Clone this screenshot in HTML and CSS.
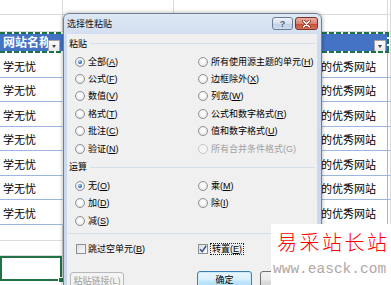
FILE: index.html
```html
<!DOCTYPE html>
<html lang="zh-CN">
<head>
  <meta charset="UTF-8" />
  <title>选择性粘贴</title>
  <link rel="stylesheet" href="styles.css">
</head>
<body>
  <div class="sheet">
    <div class="row top1">
      <div class="cell ca"></div><div class="cell cb"></div><div class="cell cc"></div><div class="cell cd"></div>
    </div>
    <div class="row top2">
      <div class="cell ca"></div><div class="cell cb"></div><div class="cell cc"></div><div class="cell cd"></div>
    </div>
    <div class="row hdr">
      <div class="hrange">
        <div class="hc ca"><span class="htext">网站名称</span><span class="filter"></span></div>
        <div class="hc cb"></div>
        <div class="hc cc"><span class="htext"></span><span class="filter"></span></div>
      </div>
      <div class="cell cd"></div>
    </div>
    <div class="row drow"><div class="cell ca">学无忧</div><div class="cell cb"></div><div class="cell cc">的优秀网站</div><div class="cell cd"></div></div>
    <div class="row drow s"><div class="cell ca">学无忧</div><div class="cell cb"></div><div class="cell cc">的优秀网站</div><div class="cell cd"></div></div>
    <div class="row drow"><div class="cell ca">学无忧</div><div class="cell cb"></div><div class="cell cc">的优秀网站</div><div class="cell cd"></div></div>
    <div class="row drow s"><div class="cell ca">学无忧</div><div class="cell cb"></div><div class="cell cc">的优秀网站</div><div class="cell cd"></div></div>
    <div class="row drow"><div class="cell ca">学无忧</div><div class="cell cb"></div><div class="cell cc">的优秀网站</div><div class="cell cd"></div></div>
    <div class="row drow s"><div class="cell ca">学无忧</div><div class="cell cb"></div><div class="cell cc">的优秀网站</div><div class="cell cd"></div></div>
    <div class="row drow"><div class="cell ca">学无忧</div><div class="cell cb"></div><div class="cell cc">的优秀网站</div><div class="cell cd"></div></div>
    <div class="row erow1">
      <div class="cell ca"></div><div class="cell cb"></div><div class="cell cc"></div><div class="cell cd"></div>
    </div>
    <div class="row erow2">
      <div class="cell ca"></div><div class="cell cb"></div><div class="cell cc"></div><div class="cell cd"></div>
    </div>
    <div class="row srow">
      <div class="cell ca"><span class="sel"><i class="handle"></i></span></div><div class="cell cb"></div><div class="cell cc"></div><div class="cell cd"></div>
    </div>
  </div>

  <div class="dialog">
    <div class="titlebar">
      <span class="title">选择性粘贴</span>
      <div class="caps">
        <span class="cap help">?</span>
        <span class="cap close">
          <svg width="9" height="8" viewBox="0 0 9 8">
            <path d="M1.5 1 L7.5 7 M7.5 1 L1.5 7" stroke="#7d2a1c" stroke-width="3" stroke-linecap="round"/>
            <path d="M1.5 1 L7.5 7 M7.5 1 L1.5 7" stroke="#fff" stroke-width="1.6" stroke-linecap="round"/>
          </svg>
        </span>
      </div>
    </div>
    <div class="client">
      <div class="group"><span>粘贴</span></div>
      <div class="opts">
        <label class="opt"><i class="radio on"></i><span>全部<span class="key">(<u>A</u>)</span></span></label>
        <label class="opt"><i class="radio"></i><span>所有使用源主题的单元<span class="key">(<u>H</u>)</span></span></label>
        <label class="opt"><i class="radio"></i><span>公式<span class="key">(<u>F</u>)</span></span></label>
        <label class="opt"><i class="radio"></i><span>边框除外<span class="key">(<u>X</u>)</span></span></label>
        <label class="opt"><i class="radio"></i><span>数值<span class="key">(<u>V</u>)</span></span></label>
        <label class="opt"><i class="radio"></i><span>列宽<span class="key">(<u>W</u>)</span></span></label>
        <label class="opt"><i class="radio"></i><span>格式<span class="key">(<u>T</u>)</span></span></label>
        <label class="opt"><i class="radio"></i><span>公式和数字格式<span class="key">(<u>R</u>)</span></span></label>
        <label class="opt"><i class="radio"></i><span>批注<span class="key">(<u>C</u>)</span></span></label>
        <label class="opt"><i class="radio"></i><span>值和数字格式<span class="key">(<u>U</u>)</span></span></label>
        <label class="opt"><i class="radio"></i><span>验证<span class="key">(<u>N</u>)</span></span></label>
        <label class="opt off"><i class="radio"></i><span>所有合并条件格式<span class="key">(G)</span></span></label>
      </div>
      <div class="group g2"><span>运算</span></div>
      <div class="opts">
        <label class="opt"><i class="radio on"></i><span>无<span class="key">(<u>O</u>)</span></span></label>
        <label class="opt"><i class="radio"></i><span>乘<span class="key">(<u>M</u>)</span></span></label>
        <label class="opt"><i class="radio"></i><span>加<span class="key">(<u>D</u>)</span></span></label>
        <label class="opt"><i class="radio"></i><span>除<span class="key">(<u>I</u>)</span></span></label>
        <label class="opt"><i class="radio"></i><span>减<span class="key">(<u>S</u>)</span></span></label>
      </div>
      <div class="sep"></div>
      <div class="checks">
        <label class="chk first"><i class="box"></i><span>跳过空单元<span class="key">(<u>B</u>)</span></span></label>
        <label class="chk"><i class="box">
          <svg width="8" height="8" viewBox="0 0 8 8"><path d="M1 4.2 L3.2 6.6 L7.2 0.8" fill="none" stroke="#34508f" stroke-width="1.5"/></svg>
        </i><span class="focus">转置<span class="key">(<u>E</u>)</span></span></label>
      </div>
      <div class="buttons">
        <span class="btn link">粘贴链接<span class="key">(L)</span></span>
        <span class="btn ok">确定</span>
        <span class="btn cancel">取消</span>
      </div>
    </div>
  </div>

  <div class="mark">
    <div class="mark-cn">易采站长站</div>
    <div class="mark-url">www.easck.com</div>
  </div>
</body>
</html>
```

FILE: styles.css
```css
* {
  box-sizing: border-box;
}
body {
  margin: 0;
  width: 391px;
  height: 285px;
  overflow: hidden;
  position: relative;
  background: #fff;
  color: #000;
  font-family: "Liberation Sans", "Noto Sans CJK SC", sans-serif;
  text-autospace: no-autospace;
}

/* spreadsheet behind the dialog */
.sheet {
  font-size: 11px;
  line-height: 14px;
}
.row {
  display: flex;
}
.cell {
  flex: none;
  border-right: 1px solid #dadada;
  border-bottom: 1px solid #dadada;
}
.ca { width: 63px; }
.cb { width: 111px; }
.cc { width: 214px; }
.cd { flex: 1; }

.top1 { height: 15px; }
.top2 { height: 17px; }

.hdr { height: 21px; }
.hrange {
  display: flex;
  position: relative;
  background: #4472c4;
  color: #fff;
  font-weight: bold;
  font-size: 12px;
}
.hrange::after {
  content: '';
  position: absolute;
  left: 0;
  right: -1px;
  top: 0;
  bottom: 0;
  background:
    repeating-linear-gradient(90deg, #1e7145 0 5px, #fff 5px 7px) top / 100% 2px no-repeat,
    repeating-linear-gradient(90deg, #1e7145 0 5px, #fff 5px 7px) bottom / 100% 2px no-repeat,
    repeating-linear-gradient(180deg, #1e7145 0 5px, #fff 5px 7px) right / 2px 100% no-repeat;
}
.hc {
  flex: none;
  display: flex;
  align-items: center;
  padding-left: 3px;
  white-space: nowrap;
  overflow: hidden;
}
.hc.ca { padding-right: 3px; }
.hc.cc { padding-right: 2px; }
.htext {
  flex: 1;
  min-width: 0;
  overflow: hidden;
}
.filter {
  flex: none;
  width: 12px;
  height: 12px;
  align-self: flex-end;
  margin-bottom: 1px;
  background: linear-gradient(#fbfbfb, #e9e9e9);
  border: 1px solid #a3a3a3;
  position: relative;
}
.filter::after {
  content: '';
  position: absolute;
  left: 3px;
  top: 4px;
  border-left: 2.5px solid transparent;
  border-right: 2.5px solid transparent;
  border-top: 3px solid #444;
}

.drow { height: 25px; }
.drow.s { height: 24px; }
.drow .cell {
  border-bottom-color: #9bb7df;
}
.drow .ca,
.drow .cb {
  border-right-color: #fff;
}
.drow .cc {
  border-right-color: #9bb7df;
}
.drow .ca {
  display: flex;
  align-items: flex-end;
  padding: 0 0 3px 3px;
}
.drow .cc {
  display: flex;
  align-items: flex-end;
  justify-content: flex-end;
  padding: 0 11px 3px 0;
  overflow: hidden;
  white-space: nowrap;
}

.erow1 { height: 16px; }
.erow2 { height: 15px; }
.srow { height: 25px; }
.srow .ca { position: relative; }
.sel {
  position: absolute;
  left: 0;
  top: 0;
  width: 62px;
  height: 25px;
  border: 2px solid #217346;
}
.handle {
  position: absolute;
  right: -4px;
  bottom: -4px;
  width: 6px;
  height: 6px;
  background: #217346;
  border: 1px solid #fff;
}

/* paste special dialog */
.dialog {
  position: absolute;
  left: 63px;
  top: 13px;
  width: 259px;
  height: 290px;
  padding: 0 4px 0 3px;
  border: 1px solid #6f8198;
  border-radius: 6px 6px 0 0;
  background: linear-gradient(#dde7f4, #cddbee 30px, #c8d7eb);
  box-shadow: 0 0 4px rgba(0, 0, 0, 0.35);
  font-size: 9px;
  line-height: 12px;
}
.key {
  font-family: "Liberation Sans", sans-serif;
  letter-spacing: 0;
}
.titlebar {
  height: 20px;
  display: flex;
  align-items: center;
}
.title {
  flex: 1;
  color: #111;
}
.caps {
  display: flex;
  gap: 2px;
  align-self: flex-start;
  margin-top: 3px;
  margin-right: -1px;
}
.cap {
  height: 13px;
  border: 1px solid #6c7d95;
  border-radius: 3px;
  display: flex;
  align-items: center;
  justify-content: center;
}
.help {
  width: 21px;
  background: linear-gradient(#eef3fa, #d3dfee 50%, #bccde3 50%, #cfdcee);
  color: #4a5566;
  font-weight: bold;
  font-size: 9px;
  text-shadow: 0 0 2px #fff;
}
.close {
  width: 23px;
  border-color: #7b3328;
  background: linear-gradient(#eab0a2, #d9826f 50%, #c24a34 50%, #d7705a);
}

.client {
  height: 260px;
  background: #f0f0f0;
}
.group {
  height: 19px;
  display: flex;
  align-items: center;
  gap: 3px;
  padding: 0 2px;
}
.group.g2 { height: 20px; }
.group::after {
  content: '';
  flex: 1;
  height: 1px;
  background: #d5dfe5;
}
.opts {
  display: grid;
  grid-template-columns: 123px 1fr;
  grid-auto-rows: 17.4px;
  padding-left: 8px;
}
.opt {
  display: flex;
  align-items: center;
  gap: 3px;
  white-space: nowrap;
}
.opt.off { color: #a0a0a0; }
.radio {
  flex: none;
  width: 10px;
  height: 10px;
  border-radius: 50%;
  border: 1px solid #8d8f90;
  background: radial-gradient(circle at 50% 40%, #fff 20%, #dadcdf);
  position: relative;
}
.off .radio {
  border-color: #c6c6c6;
  background: #f4f4f4;
}
.radio.on::after {
  content: '';
  position: absolute;
  inset: 2px;
  border-radius: 50%;
  background: radial-gradient(circle at 40% 35%, #9bd6ff, #2a6ab7 60%, #173f7a);
}

.sep {
  height: 1px;
  background: #d5dfe5;
  margin: 3px 2px 0 1px;
}
.checks {
  display: grid;
  grid-template-columns: 123px 1fr;
  height: 16px;
  margin-top: 7px;
  padding-left: 8px;
}
.chk {
  display: flex;
  align-items: center;
  gap: 2px;
  white-space: nowrap;
}
.chk.first { padding-left: 1px; }
.box {
  flex: none;
  width: 10px;
  height: 10px;
  border: 1px solid #8d8f90;
  background: linear-gradient(135deg, #dcdee2, #fbfbfb);
  display: flex;
  align-items: center;
  justify-content: center;
}
.focus {
  border: 1px dotted #222;
  padding: 0 1px;
  line-height: 10px;
}

.buttons {
  display: flex;
  align-items: flex-start;
  margin-top: 14px;
  padding: 0 2px 0 3px;
}
.btn {
  height: 20px;
  border: 1px solid #707070;
  border-radius: 3px;
  background: linear-gradient(#f2f2f2, #ebebeb 45%, #dddddd 50%, #cfcfcf);
  text-align: center;
  line-height: 16px;
}
.btn.link {
  width: 54px;
  margin-top: 1px;
  color: #a0a0a0;
  border-color: #b5b9bc;
  background: #f4f4f4;
}
.btn.ok {
  width: 55px;
  margin-left: auto;
  border-color: #3c7fb1;
  background: linear-gradient(#eaf6fd, #d9f0fc 45%, #bee6fd 50%, #a7d9f5);
  box-shadow: inset 0 0 0 1px #c9ecfc;
}
.btn.cancel {
  width: 55px;
  margin-left: 8px;
}

/* watermark in the corner */
.mark {
  position: absolute;
  right: 0;
  bottom: 0;
  width: 120px;
  height: 61px;
  background: #fff;
  padding: 7px 0 0 6px;
}
.mark-cn {
  color: #f00;
  font-family: "Noto Sans CJK SC", sans-serif;
  font-size: 20px;
  line-height: 22px;
  letter-spacing: 2.5px;
  font-weight: 300;
  white-space: nowrap;
}
.mark-url {
  color: #b2a6a6;
  font-family: "Liberation Mono", monospace;
  font-size: 14.5px;
  line-height: 16px;
  margin: 8px 0 0 -4px;
  white-space: nowrap;
}
```
